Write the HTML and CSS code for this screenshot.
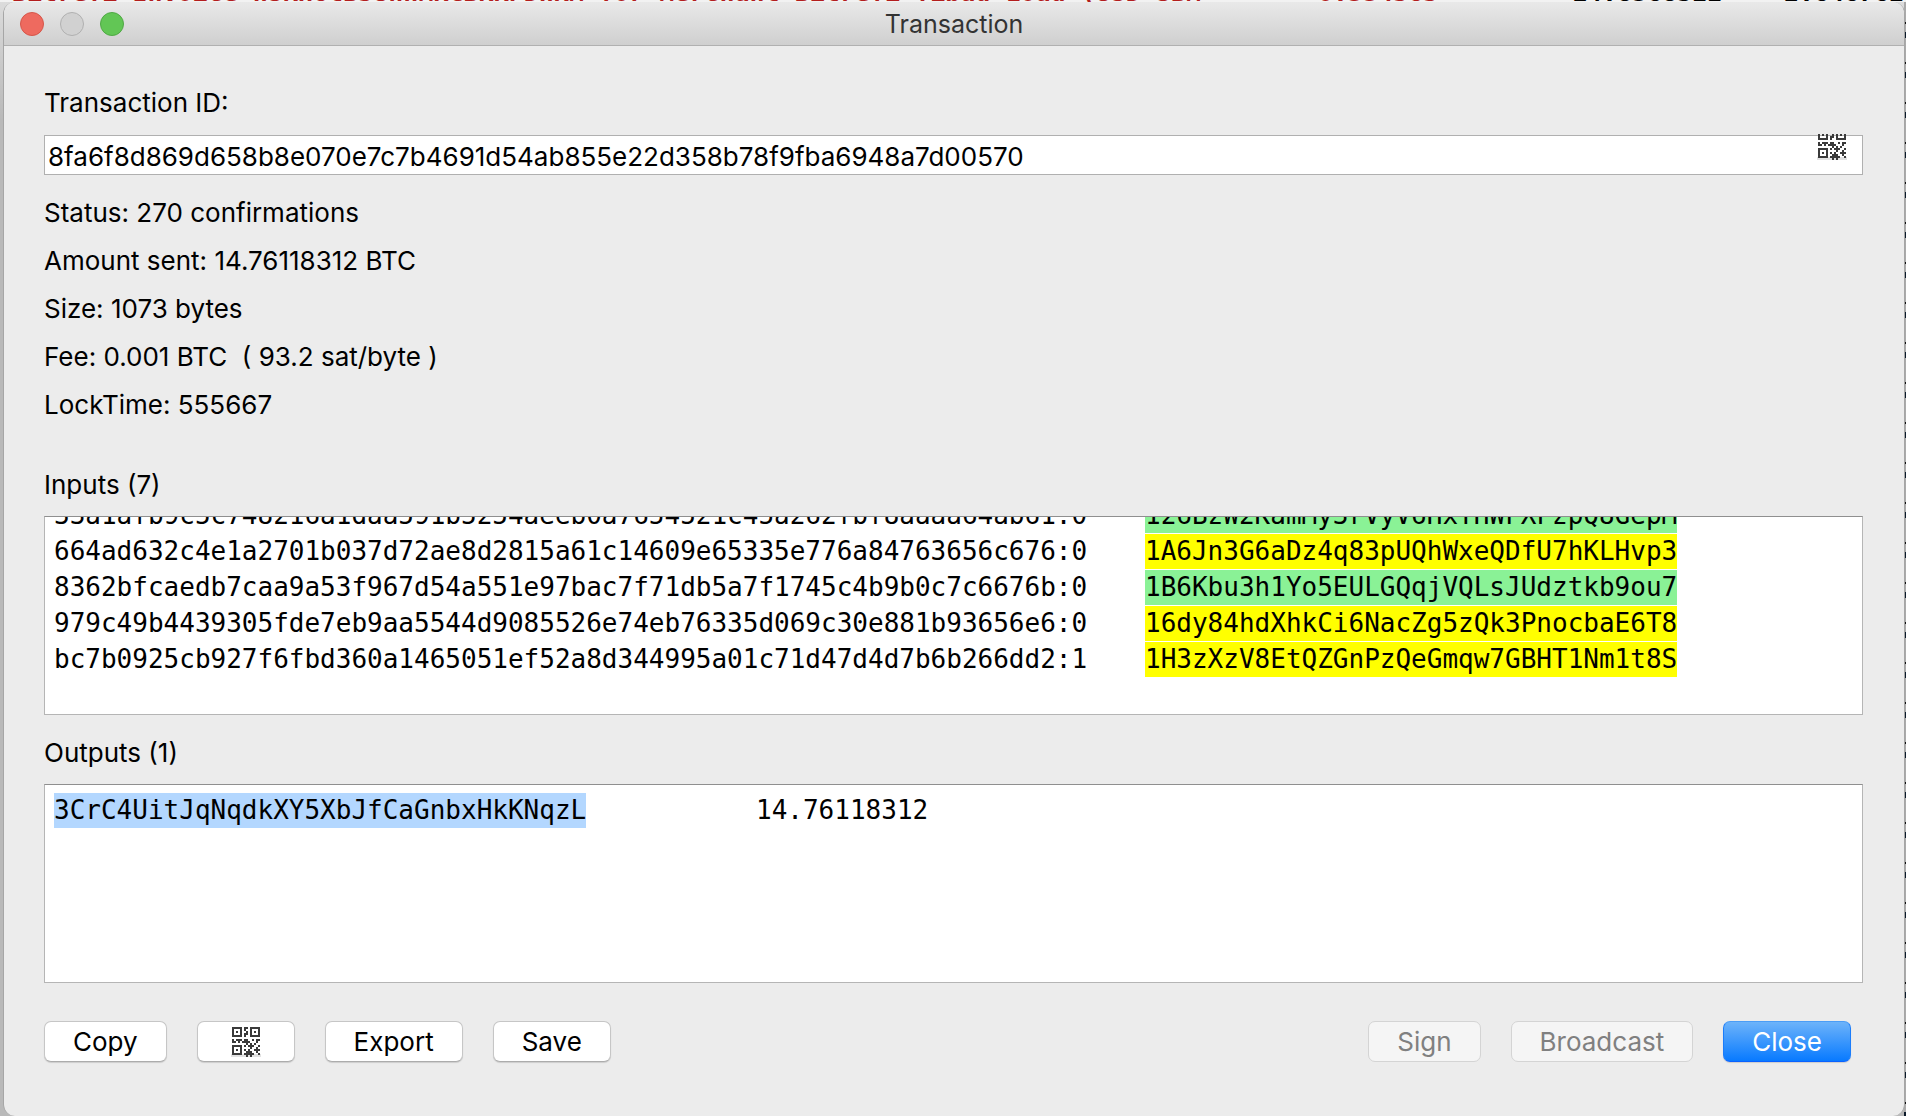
FILE: index.html
```html
<!DOCTYPE html>
<html lang="en">
<head>
<meta charset="utf-8">
<title>Transaction</title>
<link rel="stylesheet" href="styles.css">
</head>
<body>
<svg class="sprite" aria-hidden="true">
  <symbol id="qr" viewBox="0 0 30 30">
    <path d="M0 28.500H30" stroke="#e2e2e2" stroke-width="3"/>
    <path fill="#3a3a3a" fill-rule="evenodd" d="M1 0h10v10H1zM3 2v6h6V2zM5 4h2v2H5zM19 0h10v10H19zM21 2v6h6V2zM23 4h2v2h-2zM1 18h10v10H1zM3 20v6h6v-6zM5 22h2v2H5zM13 0h4v2h-2v2h2v4h-2v2h-2V6h2V4h-2zM1 12h2v2H1zM5 12h6v2h2v-2h4v2h2v2h-2v2h-2v-2h-4v-2H9v2H7v-2H5v2H1v-2h4zM21 12h2v2h-2zM25 12h4v2h-2v2h-2v2h-2v-2h2zM19 16h2v2h2v2h-2v2h-2v-2h-2v-2h2zM13 18h2v2h-2zM27 18h2v2h-2zM25 20h2v2h2v2h-2v2h2v2h-2v-2h-2v-2h-2v-2h2zM13 22h2v2h2v-2h2v2h2v2h2v2h-2v2h-2v-2h-2v2h-2v-2h-2v-2h2v-2h-2z"/>
  </symbol>
</svg>
<div class="behind" aria-hidden="true">
  <span class="memo">Bitrefi Invoice nSKH6tB5UWnMKCBKKPDnKM for Merchant Bitrefi Yibad Load (USD SBM</span>
  <span class="change">0.334565</span>
  <span class="balance">14.8368522</span>
  <span class="total">2.646762</span>
</div>
<main class="window">
  <header class="titlebar">
    <div class="lights">
      <button class="light red" aria-label="Close window"></button>
      <button class="light grey" aria-label="Minimize" disabled></button>
      <button class="light green" aria-label="Zoom"></button>
    </div>
    <h1>Transaction</h1>
  </header>
  <div class="content">
    <label for="txid">Transaction ID:</label>
    <div class="field">
      <input id="txid" type="text" readonly value="8fa6f8d869d658b8e070e7c7b4691d54ab855e22d358b78f9fba6948a7d00570">
      <button class="field-qr" aria-label="Show QR code"><svg><use href="#qr"/></svg></button>
    </div>
    <div class="facts">
      <p>Status: 270 confirmations</p>
      <p>Amount sent: 14.76118312 BTC</p>
      <p>Size: 1073 bytes</p>
      <p>Fee: 0.001 BTC&nbsp; ( 93.2 sat/byte )</p>
      <p>LockTime: 555667</p>
    </div>
    <h2>Inputs (7)</h2>
    <div class="box inputs">
      <table>
        <tr><td>33a1afb9c5c748216a1daa591b5254aeeb0a7654521c45a262fbf8aaaa64ab61:0</td><td><mark class="green-mark">126BzW2KamMy3rVyV6HxYHWFXFzpQ8GepM</mark></td></tr>
        <tr><td>664ad632c4e1a2701b037d72ae8d2815a61c14609e65335e776a84763656c676:0</td><td><mark>1A6Jn3G6aDz4q83pUQhWxeQDfU7hKLHvp3</mark></td></tr>
        <tr><td>8362bfcaedb7caa9a53f967d54a551e97bac7f71db5a7f1745c4b9b0c7c6676b:0</td><td><mark class="green-mark">1B6Kbu3h1Yo5EULGQqjVQLsJUdztkb9ou7</mark></td></tr>
        <tr><td>979c49b4439305fde7eb9aa5544d9085526e74eb76335d069c30e881b93656e6:0</td><td><mark>16dy84hdXhkCi6NacZg5zQk3PnocbaE6T8</mark></td></tr>
        <tr><td>bc7b0925cb927f6fbd360a1465051ef52a8d344995a01c71d47d4d7b6b266dd2:1</td><td><mark>1H3zXzV8EtQZGnPzQeGmqw7GBHT1Nm1t8S</mark></td></tr>
      </table>
    </div>
    <h2>Outputs (1)</h2>
    <div class="box outputs">
      <table>
        <tr><td><mark class="selected">3CrC4UitJqNqdkXY5XbJfCaGnbxHkKNqzL</mark></td><td>14.76118312</td></tr>
      </table>
    </div>
    <footer class="actions">
      <button class="btn">Copy</button>
      <button class="btn icon-btn" aria-label="Show QR code"><svg><use href="#qr"/></svg></button>
      <button class="btn">Export</button>
      <button class="btn">Save</button>
      <span class="spacer"></span>
      <button class="btn" disabled>Sign</button>
      <button class="btn" disabled>Broadcast</button>
      <button class="btn primary">Close</button>
    </footer>
  </div>
</main>
</body>
</html>
```
FILE: styles.css
```css
* { box-sizing: border-box; }
body {
  margin: 0;
  min-height: 100vh;
  display: flex;
  flex-direction: column;
  padding: 0 1px 0 3px;
  background:
    repeating-linear-gradient(#aaa 0 22px, #111 22px 24px, #aaa 24px 32px, #0b1a2a 32px 38px, #aaa 38px 40px) right / 2px 100% no-repeat,
    linear-gradient(#dcdcdc, #b9b9b9 120px);
  color: #000;
  font: 26px/32px Inter, "Liberation Sans", sans-serif;
}
.sprite { position: absolute; width: 0; height: 0; }
h1, h2, p { margin: 0; font: inherit; }
.behind {
  height: 2px;
  margin: 0 -1px 0 -3px;
  padding-left: 12px;
  display: flex;
  align-items: flex-end;
  overflow: hidden;
  background: #f2f2f2;
  color: #b31d1d;
  font: bold 25px/18px "DejaVu Sans Mono", monospace;
  white-space: pre;
}
.memo { width: 1306px; }
.change { width: 254px; }
.balance { width: 212px; color: #000; }
.total { color: #000; }
.behind span { flex: none; }
.window {
  flex: 1;
  display: flex;
  flex-direction: column;
  border: 1px solid #a6a6a6;
  border-width: 0 1px;
  border-radius: 12px;
  background: #ececec;
  overflow: hidden;
}
.titlebar {
  height: 44px;
  display: grid;
  grid-template-columns: 1fr auto 1fr;
  align-items: center;
  padding: 0 16px;
  border-bottom: 1px solid #b0b0b0;
  background: linear-gradient(#e9e9e9, #cfcfcf);
  color: #333;
  font-size: 25px;
}
.lights { display: flex; gap: 16px; }
.light { width: 24px; height: 24px; padding: 0; border: 1px solid; border-radius: 50%; }
.red { background: #ee6a5f; border-color: #d5564a; }
.grey { background: #d1d1d1; border-color: #b0b0b0; }
.green { background: #62c655; border-color: #50a845; }
.content { flex: 1; display: flex; flex-direction: column; padding: 41px 41px 52px 40px; }
.field { position: relative; margin-top: 16px; }
.field input {
  display: block;
  width: 100%;
  height: 40px;
  padding: 2px 3px 0;
  border: 1px solid #b0b0b0;
  background: #fff;
  color: #000;
  font: inherit;
  outline: none;
}
.field-qr {
  position: absolute;
  right: 15px;
  top: -1px;
  width: 32px;
  height: 26px;
  padding: 0;
  border: 0;
  background: none;
  overflow: hidden;
  display: flex;
  align-items: flex-end;
}
svg { width: 32px; height: 30px; flex: none; display: block; }
.facts { margin: 22px 0 48px; display: grid; gap: 16px; }
h2 { margin-bottom: 15px; }
.box {
  height: 199px;
  margin-bottom: 22px;
  border: 1px solid #b5b5b5;
  border-top-color: #8f8f8f;
  background: #fff;
  overflow: hidden;
  font: 26px/35px "DejaVu Sans Mono", monospace;
}
.inputs { display: flex; flex-direction: column; justify-content: flex-end; padding-bottom: 36px; }
.outputs { padding-top: 8px; }
table { border-collapse: collapse; margin-left: 9px; }
td { height: 36px; padding: 0; white-space: pre; vertical-align: top; }
.inputs td:first-child { width: 1091px; }
.outputs td:first-child { width: 702px; }
mark { display: inline-block; height: 35px; background: #ff0; color: inherit; }
.green-mark { background: #8af296; }
.selected { background: #b3d7ff; }
.inputs table { flex: none; width: max-content; }
.actions { display: flex; align-items: center; gap: 30px; margin-top: 16px; padding-right: 12px; }
.spacer { flex: 1; }
.btn {
  height: 41px;
  padding: 0 28px;
  border: 1px solid #c6c6c6;
  border-bottom-color: #acacac;
  border-radius: 7px;
  background: #fff;
  color: #000;
  font: inherit;
  box-shadow: 0 1px 1px #0002;
}
.icon-btn { padding: 0 32px; }
.btn:disabled { background: #f5f5f5; color: #808080; border-color: #d4d4d4; box-shadow: none; }
.primary { background: linear-gradient(#6db3fa, #087aff); border-color: #4b9df6 #1b7dfb #0a62ff; color: #fff; }
```
